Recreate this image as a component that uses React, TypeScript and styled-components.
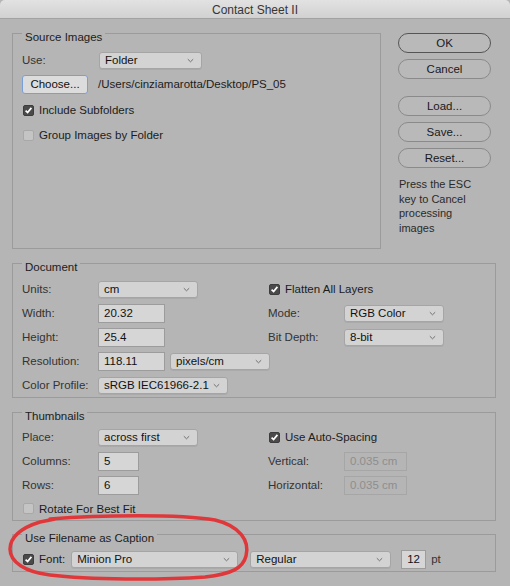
import React from "react";
import styled, { createGlobalStyle } from "styled-components";

const GlobalStyle = createGlobalStyle`
  * {
    box-sizing: border-box;
  }

  html,
  body {
    margin: 0;
    padding: 0;
    background: #b5b5b5;
  }

  body {
    font-family: "Liberation Sans", Arial, sans-serif;
    font-size: 11.5px;
    color: #1c1c1c;
  }
`;

type SelectProps = { w: number; value: string; ml?: number };

function Select({ w, value, ml = 0 }: SelectProps) {
  return (
    <SelectBox $w={w} $ml={ml}>
      <span>{value}</span>
      <svg width="7" height="5" viewBox="0 0 7 5">
        <path d="M0.8 1.2 L3.5 3.8 L6.2 1.2" fill="none" stroke="#707070" strokeWidth="1" />
      </svg>
    </SelectBox>
  );
}

function Check({ on }: { on?: boolean }) {
  return (
    <Box $on={on}>
      {on && (
        <svg width="9" height="9" viewBox="0 0 9 9">
          <path d="M1.6 4.6 L3.6 6.6 L7.4 1.9" fill="none" stroke="#fff" strokeWidth="1.7" />
        </svg>
      )}
    </Box>
  );
}

export default function App() {
  return (
    <Window>
      <GlobalStyle />
      <TitleBar>Contact Sheet II</TitleBar>

      <Body>
        <TopRow>
          <Group $width={369} $height={227} $pad={4}>
            <Legend>Source Images</Legend>
            <Row>
              <Label $w={77}>Use:</Label>
              <Select w={103} value="Folder" />
            </Row>
            <Row>
              <ChooseButton type="button">Choose...</ChooseButton>
              <Value>/Users/cinziamarotta/Desktop/PS_05</Value>
            </Row>
            <Row $h={28}>
              <Check on />
              <Value>Include Subfolders</Value>
            </Row>
            <Row $h={22}>
              <Check />
              <Value>Group Images by Folder</Value>
            </Row>
          </Group>

          <Side>
            <Pill type="button" $primary>OK</Pill>
            <Pill type="button" $mt={6}>Cancel</Pill>
            <Pill type="button" $mt={17}>Load...</Pill>
            <Pill type="button" $mt={6}>Save...</Pill>
            <Pill type="button" $mt={6}>Reset...</Pill>
            <Note>Press the ESC key to Cancel processing images</Note>
          </Side>
        </TopRow>

        <Group $gap={3} $pad={3}>
          <Legend>Document</Legend>
          <Columns>
            <Stack>
              <Row>
                <Label>Units:</Label>
                <Select w={100} value="cm" />
              </Row>
              <Row>
                <Label>Width:</Label>
                <Field $w={67} defaultValue="20.32" />
              </Row>
              <Row>
                <Label>Height:</Label>
                <Field $w={67} defaultValue="25.4" />
              </Row>
              <Row>
                <Label>Resolution:</Label>
                <Field $w={67} defaultValue="118.11" />
                <Select w={100} value="pixels/cm" ml={5} />
              </Row>
              <Row>
                <Label>Color Profile:</Label>
                <Select w={130} value="sRGB IEC61966-2.1" />
              </Row>
            </Stack>
            <Stack>
              <Row>
                <Check on />
                <Value>Flatten All Layers</Value>
              </Row>
              <Row>
                <Label>Mode:</Label>
                <Select w={100} value="RGB Color" />
              </Row>
              <Row>
                <Label>Bit Depth:</Label>
                <Select w={100} value="8-bit" />
              </Row>
            </Stack>
          </Columns>
        </Group>

        <Group $gap={3} $pad={2}>
          <Legend>Thumbnails</Legend>
          <Columns>
            <Stack>
              <Row>
                <Label>Place:</Label>
                <Select w={100} value="across first" />
              </Row>
              <Row>
                <Label>Columns:</Label>
                <Field $w={41} defaultValue="5" />
              </Row>
              <Row>
                <Label>Rows:</Label>
                <Field $w={41} defaultValue="6" />
              </Row>
              <Row $h={23}>
                <Check />
                <Value>Rotate For Best Fit</Value>
              </Row>
            </Stack>
            <Stack>
              <Row>
                <Check on />
                <Value>Use Auto-Spacing</Value>
              </Row>
              <Row>
                <Label>Vertical:</Label>
                <Field $w={63} defaultValue="0.035 cm" disabled />
              </Row>
              <Row>
                <Label>Horizontal:</Label>
                <Field $w={63} defaultValue="0.035 cm" disabled />
              </Row>
            </Stack>
          </Columns>
        </Group>

        <Group $gap={2} $pad={2}>
          <Legend>Use Filename as Caption</Legend>
          <Row>
            <Check on />
            <Value>Font:</Value>
            <Select w={167} value="Minion Pro" ml={6} />
            <Select w={141} value="Regular" ml={12} />
            <Field $w={25} $ml={10} defaultValue="12" />
            <Unit>pt</Unit>
          </Row>
        </Group>
      </Body>

      <Mark viewBox="0 0 510 586">
        <path
          d="M50 519 C100 515, 180 514, 215 520 C240 526, 250 541, 246 556 C243 568, 232 574, 205 577 C160 580, 90 580, 50 575 C25 572, 10 562, 10 549 C10 538, 20 528, 40 522 L55 519"
          fill="none"
          stroke="#e0383a"
          strokeWidth="3.5"
          strokeLinecap="round"
          strokeLinejoin="round"
        />
      </Mark>
    </Window>
  );
}

const Window = styled.div`
  position: relative;
  width: 510px;
  height: 586px;
  background: #b5b5b5;
  overflow: hidden;
`;

const TitleBar = styled.div`
  height: 19px;
  display: flex;
  align-items: center;
  justify-content: center;
  padding-top: 1px;
  background: linear-gradient(#e2e2e2, #d1d1d1);
  border-bottom: 1px solid #a2a2a2;
  border-radius: 5px 5px 0 0;
  font-size: 12px;
  color: #363636;
`;

const Body = styled.div`
  padding: 3px 14px 0 12px;
`;

const TopRow = styled.div`
  display: flex;
  align-items: flex-start;
`;

const Group = styled.fieldset<{ $width?: number; $height?: number; $gap?: number; $pad?: number }>`
  display: block;
  min-width: 0;
  width: ${(p) => (p.$width ? `${p.$width}px` : "auto")};
  height: ${(p) => (p.$height ? `${p.$height}px` : "auto")};
  margin: ${(p) => p.$gap ?? 0}px 0 0;
  padding: ${(p) => p.$pad ?? 3}px 0 0 9px;
  border: 1px solid #9b9b9b;
`;

const Legend = styled.legend`
  padding: 8px 3px 0;
  line-height: 14px;
  font-size: 11.5px;
  color: #1c1c1c;
`;

const Row = styled.div<{ $h?: number }>`
  display: flex;
  align-items: center;
  height: ${(p) => p.$h ?? 24}px;
  white-space: nowrap;
`;

const Label = styled.span<{ $w?: number }>`
  flex-shrink: 0;
  width: ${(p) => p.$w ?? 76}px;
  color: #333;
`;

const Value = styled.span`
  color: #1c1c1c;
`;

const Unit = styled.span`
  margin-left: 5px;
  color: #333;
`;

const Columns = styled.div`
  display: flex;
`;

const Stack = styled.div`
  width: 246px;
  flex-shrink: 0;
`;

const SelectBox = styled.div<{ $w: number; $ml: number }>`
  display: flex;
  align-items: center;
  justify-content: space-between;
  flex-shrink: 0;
  width: ${(p) => p.$w}px;
  height: 17px;
  margin-left: ${(p) => p.$ml}px;
  padding: 0 7px 0 5px;
  background: #d3d3d3;
  border: 1px solid #a5a5a5;
  border-radius: 3px;
  color: #111;
  box-shadow: 0 1px 0 rgba(0, 0, 0, 0.06);
`;

const Field = styled.input<{ $w: number; $ml?: number }>`
  flex-shrink: 0;
  width: ${(p) => p.$w}px;
  height: 19px;
  margin: 0 0 0 ${(p) => p.$ml ?? 0}px;
  padding: 0 5px;
  background: #d6d6d6;
  border: 1px solid #9c9c9c;
  font: inherit;
  color: #111;
  outline: none;

  &:disabled {
    background: #b5b5b5;
    border-color: #a6a6a6;
    color: #8e8e8e;
  }
`;

const Box = styled.span<{ $on?: boolean }>`
  display: inline-flex;
  align-items: center;
  justify-content: center;
  flex-shrink: 0;
  width: 11px;
  height: 11px;
  margin: 0 5px 0 1px;
  border-radius: 2px;
  background: ${(p) => (p.$on ? "#4a4a4a" : "#c4c4c4")};
  border: 1px solid ${(p) => (p.$on ? "#3c3c3c" : "#a8a8a8")};
`;

const ChooseButton = styled.button`
  flex-shrink: 0;
  width: 66px;
  height: 19px;
  margin-right: 10px;
  padding: 0;
  background: #dcdcdc;
  border: 1px solid #7a9fd6;
  border-radius: 3px;
  font: inherit;
  color: #111;
`;

const Side = styled.div`
  display: flex;
  flex-direction: column;
  width: 93px;
  margin-left: 17px;
  padding-top: 11px;
`;

const Pill = styled.button<{ $primary?: boolean; $mt?: number }>`
  width: 93px;
  height: 20px;
  margin-top: ${(p) => p.$mt ?? 0}px;
  padding: 0;
  background: #b9b9b9;
  border: 1px solid ${(p) => (p.$primary ? "#555" : "#8a8a8a")};
  border-radius: 10px;
  font: inherit;
  color: #1a1a1a;
`;

const Note = styled.p`
  width: 76px;
  margin: 9px 0 0 1px;
  font-size: 11px;
  line-height: 14.7px;
  color: #2a2a2a;
`;

const Mark = styled.svg`
  position: absolute;
  top: 0;
  left: 0;
  width: 510px;
  height: 586px;
  pointer-events: none;
`;
